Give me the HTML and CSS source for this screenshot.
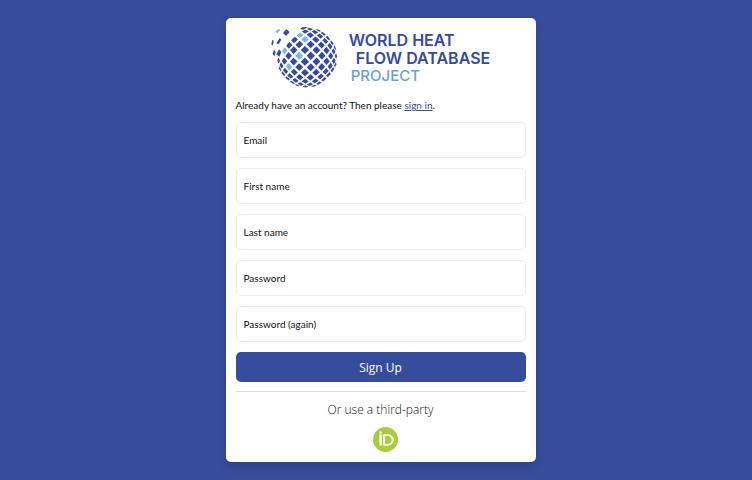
FILE: index.html
```html
<!DOCTYPE html>
<html lang="en">
<head>
<meta charset="utf-8">
<meta name="viewport" content="width=device-width, initial-scale=1">
<title>Sign Up</title>
<link rel="stylesheet" href="styles.css">
</head>
<body>
<main class="card">
  <header class="brand">
    <svg class="globe" viewBox="0 0 204 192" aria-hidden="true"></svg>
    <div class="brand-name">
      <span>WORLD HEAT</span>
      <span class="indent">FLOW DATABASE</span>
      <span class="light">PROJECT</span>
    </div>
  </header>
  <p class="intro">Already have an account? Then please <a href="#">sign in</a>.</p>
  <form class="form">
    <div class="field"><input id="email" type="email"><label for="email">Email</label></div>
    <div class="field"><input id="first" type="text"><label for="first">First name</label></div>
    <div class="field"><input id="last" type="text"><label for="last">Last name</label></div>
    <div class="field"><input id="pw1" type="password"><label for="pw1">Password</label></div>
    <div class="field"><input id="pw2" type="password"><label for="pw2">Password (again)</label></div>
    <button class="submit" type="submit">Sign Up</button>
  </form>
  <hr class="rule">
  <h2 class="third">Or use a third-party</h2>
  <div class="providers">
    <a class="orcid" href="#" aria-label="ORCID">
      <svg viewBox="0 0 256 256"><circle cx="128" cy="128" r="128" fill="#a6ce39"/><g fill="#fff"><path d="M71 79h15v107H71z"/><circle cx="78" cy="56" r="12"/><path fill-rule="evenodd" d="M109 79h42c40 0 57 28 57 54 0 28-22 53-57 53h-42zm15 14v80h25c35 0 43-27 43-40 0-22-14-40-44-40z"/></g><path d="M71 79h15v107H71zM109 79h42c40 0 57 28 57 54 0 28-22 53-57 53h-42z" fill="none" stroke="#fff" stroke-width="9"/></svg>
    </a>
  </div>
</main>
<script src="globe.js"></script>
</body>
</html>
```
FILE: globe.js
```js
// Draws the globe as a diamond lattice wrapped over a sphere.
const svg = document.querySelector('.globe');
const R = 91, CX = 108, CY = 91, STEP = 11.2, HALF = 7.9;
const lightCells = ['0,3', '-1,0', '-3,-2', '-1,4', '-4,1'];

function project(u, v) {
  const r = Math.min(Math.hypot(u, v), 90);
  const a = Math.atan2(v, u);
  const d = R * Math.sin(r * Math.PI / 180);
  return (CX + d * Math.cos(a)).toFixed(1) + ',' + (CY - d * Math.sin(a)).toFixed(1);
}

function shape(points, light) {
  const p = document.createElementNS('http://www.w3.org/2000/svg', 'polygon');
  p.setAttribute('points', points);
  p.setAttribute('class', light ? 'cell-light' : 'cell');
  svg.appendChild(p);
}

for (let k = -8; k <= 8; k++) {
  for (let j = -8; j <= 8; j++) {
    if ((k + j) % 2 === 0) continue;
    const u = -4 + j * STEP, v = 3 + k * STEP;
    const r = Math.hypot(u, v);
    if (r > 82 || (r > 53 && u < -8 && v > 0)) continue;
    const pts = [[u - HALF, v], [u, v + HALF], [u + HALF, v], [u, v - HALF]];
    shape(pts.map(p => project(...p)).join(' '), lightCells.includes(j + ',' + k));
  }
}

// Loose tiles drifting off the upper left edge.
shape('13,15 22,5 28,8 20,19', true);
shape('36,18 46,7 56,15 45,27');
shape('16,49 26,33 31,38 23,52');
shape('1,52 4,38 8,41 5,56');
shape('16,82 24,67 31,75 25,89');
shape('5,81 9,68 14,75 10,88');
shape('87,6 95,0 105,3 97,8');
```
FILE: styles.css
```css
* { box-sizing: border-box; }
body {
  margin: 0;
  min-height: 100vh;
  padding: 18px 0 18px 9px;
  background: #364d9b;
  color: #111;
  font: 10px/16px Lato, "Noto Sans", sans-serif;
}
.card {
  max-width: 310px;
  margin: 0 auto;
  padding: 9px 10px 10px;
  background: #fff;
  border-radius: 5px;
  box-shadow: 0 5px 10px rgba(0, 0, 0, .15);
}
.brand {
  display: flex;
  justify-content: center;
  gap: 10px;
}
.globe { width: 68px; height: 64px; }
.cell { fill: #344b9d; }
.cell-light { fill: #7db9e3; }
.brand-name {
  display: flex;
  flex-direction: column;
  padding-top: 4px;
  color: #344b9d;
  font: 600 16px/18px Inter, sans-serif;
  white-space: nowrap;
}
.indent { padding-left: 7px; }
.light {
  padding-left: 2px;
  color: #6ca0d8;
  font-size: 15px;
  font-weight: 500;
}
.intro { margin: 6px 0 9px; }
.intro a { color: #364d9b; }
.form { display: grid; gap: 10px; }
.field { display: grid; }
.field input, .field label { grid-area: 1 / 1; }
.field input {
  width: 100%;
  height: 36px;
  padding: 0 7px;
  border: 1px solid #ebecee;
  border-radius: 5px;
  background: #fff;
  font: inherit;
}
.field label {
  align-self: center;
  justify-self: start;
  padding-left: 8px;
  pointer-events: none;
}
.submit {
  height: 30px;
  padding: 2px 0 0;
  border: 0;
  border-radius: 5px;
  background: #364d9b;
  color: #fff;
  font: 12px/18px "Open Sans", sans-serif;
}
.rule {
  margin: 9px 0;
  border: 0;
  border-top: 1px solid #dedfe0;
}
.third {
  margin: 0 0 8px;
  text-align: center;
  font: 300 12px/18px "Open Sans", sans-serif;
}
.providers {
  display: flex;
  justify-content: center;
  padding-left: 10px;
}
.orcid svg { display: block; width: 25px; height: 25px; }
```
